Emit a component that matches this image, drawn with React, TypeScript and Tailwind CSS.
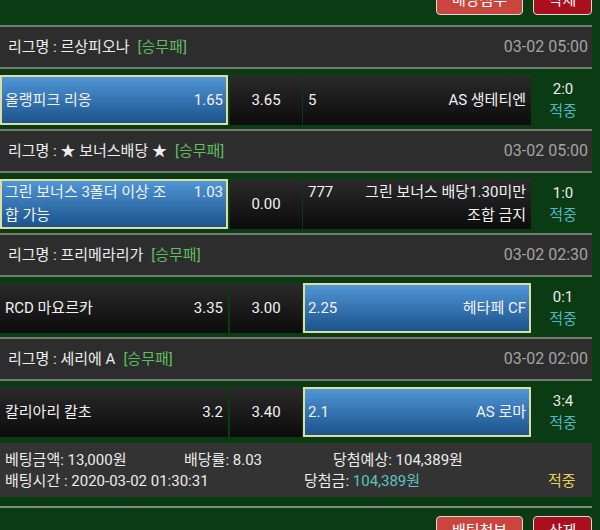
import React from "react";

type Side = { name: React.ReactNode; odds: string; selected?: boolean };
type Match = {
  league: React.ReactNode;
  date: string;
  home: Side;
  draw: string;
  away: Side;
  score: string;
};

const matches: Match[] = [
  {
    league: "르상피오나",
    date: "03-02 05:00",
    home: { name: "올랭피크 리옹", odds: "1.65", selected: true },
    draw: "3.65",
    away: { name: "AS 생테티엔", odds: "5" },
    score: "2:0",
  },
  {
    league: "★ 보너스배당 ★",
    date: "03-02 05:00",
    home: {
      name: (
        <>
          그린 보너스 3폴더 이상 조<br />합 가능
        </>
      ),
      odds: "1.03",
      selected: true,
    },
    draw: "0.00",
    away: {
      name: (
        <>
          그린 보너스 배당1.30미만
          <br />
          조합 금지
        </>
      ),
      odds: "777",
    },
    score: "1:0",
  },
  {
    league: "프리메라리가",
    date: "03-02 02:30",
    home: { name: "RCD 마요르카", odds: "3.35" },
    draw: "3.00",
    away: { name: "헤타페 CF", odds: "2.25", selected: true },
    score: "0:1",
  },
  {
    league: "세리에 A",
    date: "03-02 02:00",
    home: { name: "칼리아리 칼초", odds: "3.2" },
    draw: "3.40",
    away: { name: "AS 로마", odds: "2.1", selected: true },
    score: "3:4",
  },
];

function cellBg(selected?: boolean) {
  return selected
    ? "bg-linear-to-b from-[#5096d6] to-[#1b538c] border-2 border-[#dede9e] px-[3px]"
    : "bg-linear-to-b from-[#2b2b2b] to-[#0c0c0c] px-[5px]";
}

function HomeCell({ side }: { side: Side }) {
  return (
    <div className={`w-[228px] h-[50px] flex items-center ${cellBg(side.selected)}`}>
      <div className="w-full leading-[23px]">
        <span className="float-right pl-[6px]">{side.odds}</span>
        <span>{side.name}</span>
      </div>
    </div>
  );
}

function AwayCell({ side }: { side: Side }) {
  return (
    <div className={`w-[228px] h-[50px] flex items-center ${cellBg(side.selected)}`}>
      <div className="w-full leading-[23px] text-right">
        <span className="float-left pr-[6px]">{side.odds}</span>
        <span>{side.name}</span>
      </div>
    </div>
  );
}

function Block({ m }: { m: Match }) {
  return (
    <div>
      <div className="h-[44px] border-y-2 border-[#6f7d70] bg-[#2d2d2d] flex items-center justify-between pl-[8px] pr-[4px]">
        <span className="text-[#eeeeee]">
          리그명 : {m.league}
          <span className="ml-[8px] text-[#5fbf5f]">[승무패]</span>
        </span>
        <span className="text-[16px] text-[#a3a3a3]">{m.date}</span>
      </div>
      <div className="flex pt-[6px] pb-[4px] text-[#f2f2f2]">
        <HomeCell side={m.home} />
        <div className="ml-[2px] w-[72px] h-[50px] flex items-center justify-center bg-linear-to-b from-[#2b2b2b] to-[#0c0c0c]">
          {m.draw}
        </div>
        <div className="ml-[1px]">
          <AwayCell side={m.away} />
        </div>
        <div className="flex-1 flex flex-col items-center justify-center leading-[22px] pl-[3px]">
          <span className="text-[#ececec]">{m.score}</span>
          <span className="text-[#52b6c6]">적중</span>
        </div>
      </div>
    </div>
  );
}

function Buttons({ first }: { first: string }) {
  return (
    <div className="flex gap-[10px]">
      <div className="w-[87px] h-[30px] rounded-[4px] border border-[#d8d8d8] bg-[#c9463e] text-white flex items-center justify-center">
        {first}
      </div>
      <div className="w-[59px] h-[30px] rounded-[4px] border border-[#d8d8d8] bg-[#a90f1d] text-white flex items-center justify-center">
        삭제
      </div>
    </div>
  );
}

export default function App() {
  return (
    <div className="w-[600px] h-[530px] overflow-hidden bg-[#0a3b12] font-['Roboto','Noto_Sans_CJK_KR',sans-serif] text-[15px]">
      <div className="w-[592px]">
        <div className="h-[25px] overflow-hidden flex justify-end items-end">
          <div className="mb-[10px]">
            <Buttons first="배당첨부" />
          </div>
        </div>
        {matches.map((m, i) => (
          <Block key={i} m={m} />
        ))}
        <div className="mt-[2px] h-[54px] bg-[#333333] text-[#ececec] pl-[5px] pt-[7px] leading-[21px]">
          <div className="flex">
            <span className="w-[179px]">베팅금액: 13,000원</span>
            <span className="w-[149px]">배당률: 8.03</span>
            <span>당첨예상: 104,389원</span>
          </div>
          <div className="flex">
            <span className="w-[299px]">배팅시간 : 2020-03-02 01:30:31</span>
            <span className="w-[244px]">
              당첨금: <span className="text-[#5cc2c0]">104,389원</span>
            </span>
            <span className="text-[#e3d25a]">적중</span>
          </div>
        </div>
        <div className="mt-[9px] h-[2px] bg-[#7f8c80]" />
        <div className="mt-[8px] flex justify-end">
          <Buttons first="배팅첨부" />
        </div>
      </div>
    </div>
  );
}
